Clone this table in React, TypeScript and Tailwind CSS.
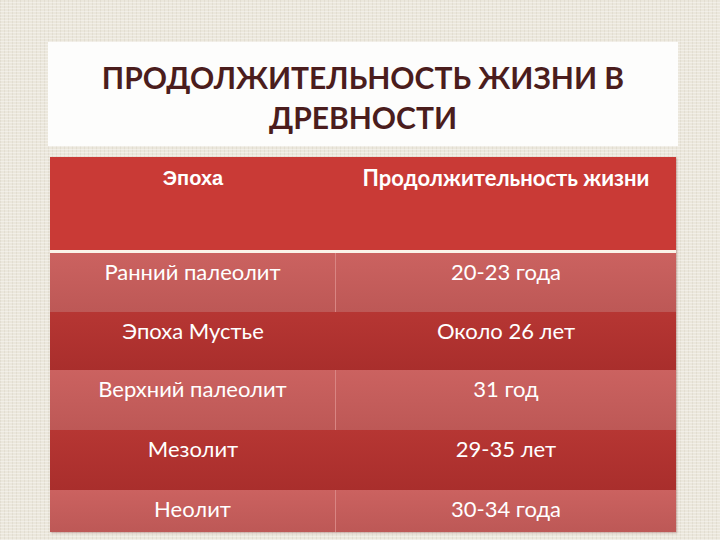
import React from 'react';

type Row = { epoch: string; life: string; tone: 'light' | 'dark'; h: string };

const rows: Row[] = [
  { epoch: 'Ранний палеолит', life: '20-23 года', tone: 'light', h: 'h-[59px]' },
  { epoch: 'Эпоха Мустье', life: 'Около 26 лет', tone: 'dark', h: 'h-[58px]' },
  { epoch: 'Верхний палеолит', life: '31 год', tone: 'light', h: 'h-[60px]' },
  { epoch: 'Мезолит', life: '29-35 лет', tone: 'dark', h: 'h-[60px]' },
  { epoch: 'Неолит', life: '30-34 года', tone: 'light', h: 'h-[42px]' },
];

const App: React.FC = () => {
  return (
    <div className="w-[720px] h-[540px] overflow-hidden bg-[#ebe7dc] bg-[repeating-linear-gradient(0deg,rgba(255,255,255,0.35)_0px,rgba(255,255,255,0.35)_1px,transparent_1px,transparent_3px),repeating-linear-gradient(90deg,rgba(200,192,175,0.25)_0px,rgba(200,192,175,0.25)_1px,transparent_1px,transparent_4px)] pt-[42px] pl-[48px] font-['Lato','Open_Sans',sans-serif]">
      {/* Заголовок */}
      <div className="w-[630px] h-[104px] bg-[#fdfdfc] flex flex-col items-center pt-[15px]">
        <h1 className="text-[#4b1d1d] font-bold text-[30px] leading-[40px] text-center tracking-[0px]">
          ПРОДОЛЖИТЕЛЬНОСТЬ ЖИЗНИ В
          <br />
          ДРЕВНОСТИ
        </h1>
      </div>

      {/* Таблица */}
      <div className="mt-[11px] ml-[2px] w-[626px] text-white shadow-[1px_1px_2px_rgba(120,40,40,0.35)]">
        <div className="h-[93px] bg-[#c93a36] flex font-bold leading-[26px]">
          <div className="w-[286px] text-center pt-[8px] font-['Liberation_Sans',sans-serif] text-[20px]">Эпоха</div>
          <div className="flex-1 text-center pt-[8px] text-[22px]">Продолжительность жизни</div>
        </div>
        <div className="h-[3px] bg-[#fbf3e9]" />
        {rows.map(r => (
          <div
            key={r.epoch}
            className={`${r.h} flex text-[22px] leading-[28px] ${
              r.tone === 'light'
                ? 'bg-[linear-gradient(180deg,#cb6260,#bd5856)]'
                : 'bg-[linear-gradient(180deg,#b63633,#a92e2c)]'
            }`}
          >
            <div
              className={`w-[286px] text-center pt-[5px] ${
                r.tone === 'light' ? 'border-r border-[#d98583]' : ''
              }`}
            >
              {r.epoch}
            </div>
            <div className="flex-1 text-center pt-[5px]">{r.life}</div>
          </div>
        ))}
      </div>
    </div>
  );
};

export default App;
